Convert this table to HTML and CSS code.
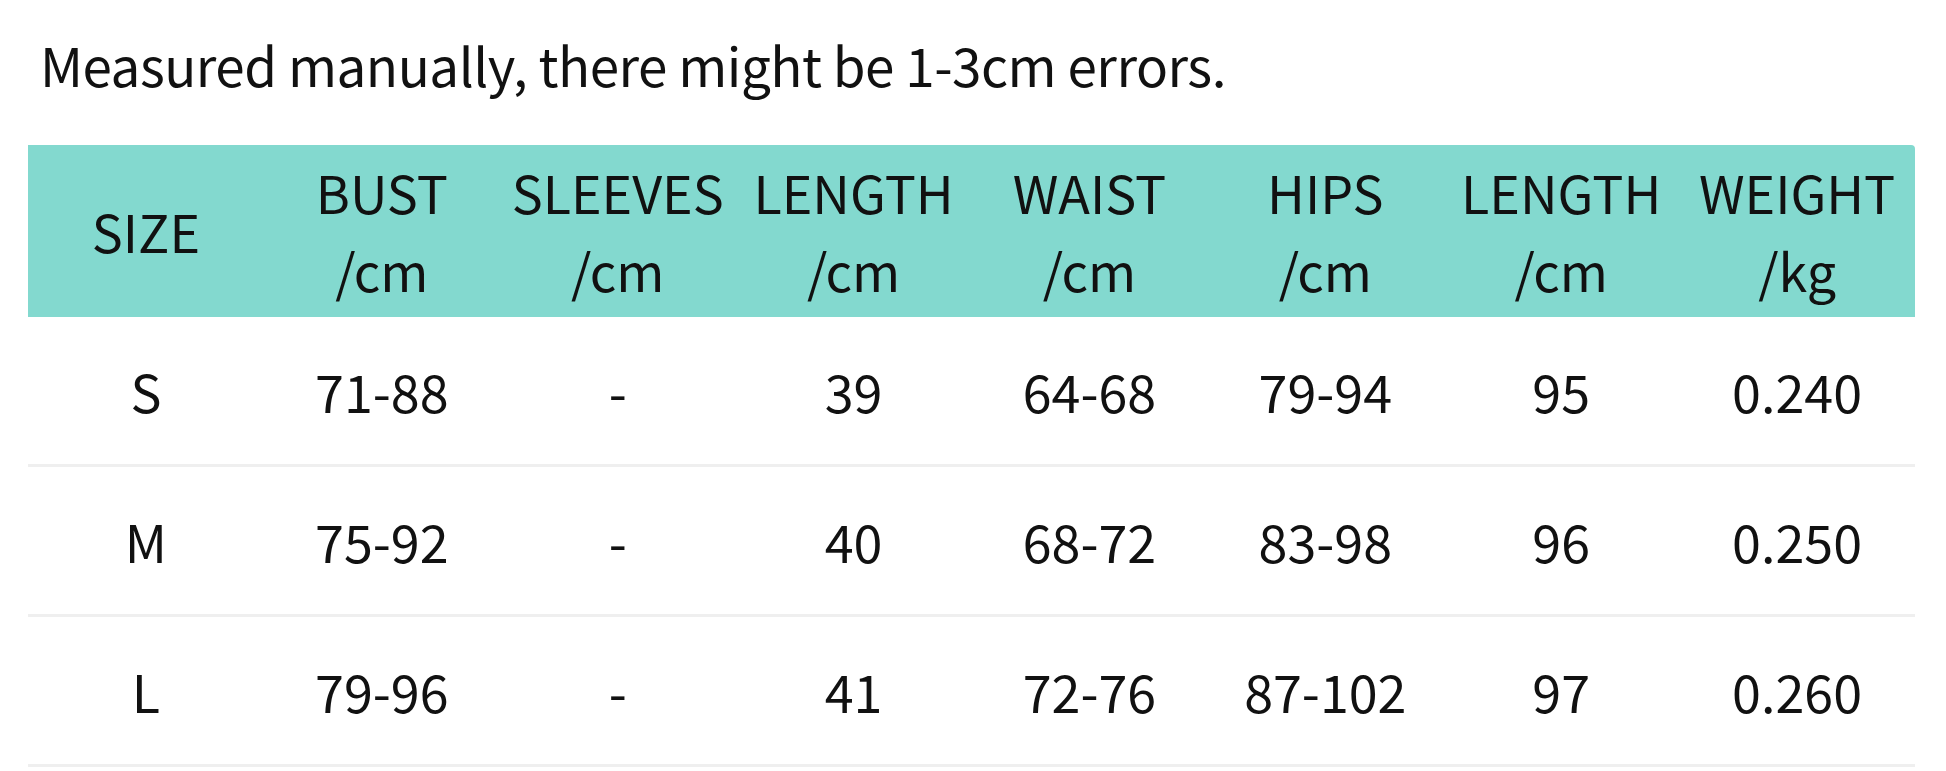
FILE: index.html
```html
<!DOCTYPE html>
<html lang="en">
<head>
<meta charset="utf-8">
<title>Size chart</title>
<link rel="stylesheet" href="styles.css">
</head>
<body>
<div class="page">
  <p class="note">Measured manually, there might be 1-3cm errors.</p>
  <div class="chart">
    <div class="row head">
      <div class="cell"><span>SIZE</span></div>
      <div class="cell"><span>BUST</span><span>/cm</span></div>
      <div class="cell"><span>SLEEVES</span><span>/cm</span></div>
      <div class="cell"><span>LENGTH</span><span>/cm</span></div>
      <div class="cell"><span>WAIST</span><span>/cm</span></div>
      <div class="cell"><span>HIPS</span><span>/cm</span></div>
      <div class="cell"><span>LENGTH</span><span>/cm</span></div>
      <div class="cell"><span>WEIGHT</span><span>/kg</span></div>
    </div>
    <div class="row body">
      <div class="cell">S</div><div class="cell">71-88</div><div class="cell">-</div><div class="cell">39</div>
      <div class="cell">64-68</div><div class="cell">79-94</div><div class="cell">95</div><div class="cell">0.240</div>
    </div>
    <div class="row body">
      <div class="cell">M</div><div class="cell">75-92</div><div class="cell">-</div><div class="cell">40</div>
      <div class="cell">68-72</div><div class="cell">83-98</div><div class="cell">96</div><div class="cell">0.250</div>
    </div>
    <div class="row body">
      <div class="cell">L</div><div class="cell">79-96</div><div class="cell">-</div><div class="cell">41</div>
      <div class="cell">72-76</div><div class="cell">87-102</div><div class="cell">97</div><div class="cell">0.260</div>
    </div>
  </div>
</div>
</body>
</html>
```
FILE: styles.css
```css
html, body {
  margin: 0;
  padding: 0;
  background: #ffffff;
}

.page {
  font-family: "Noto Sans CJK SC", "Noto Sans", sans-serif;
  font-weight: 400;
  color: #111111;
  padding: 0 31px 0 28px;
}

.note {
  margin: 0;
  padding: 38px 0 0 12px;
  height: 145px;
  box-sizing: border-box;
  font-size: 53px;
  line-height: 1;
  letter-spacing: -0.5px;
}

.chart {
  display: flex;
  flex-direction: column;
}

.row {
  display: grid;
  grid-template-columns: repeat(8, 1fr);
}

.head {
  background: #83d9cf;
  height: 172px;
  border-top-right-radius: 4px;
}

.body {
  height: 150px;
  border-bottom: 3px solid #efefef;
  box-sizing: border-box;
}

.cell {
  display: flex;
  flex-direction: column;
  align-items: center;
  justify-content: center;
  font-size: 52px;
  line-height: 78px;
  white-space: nowrap;
}
```
